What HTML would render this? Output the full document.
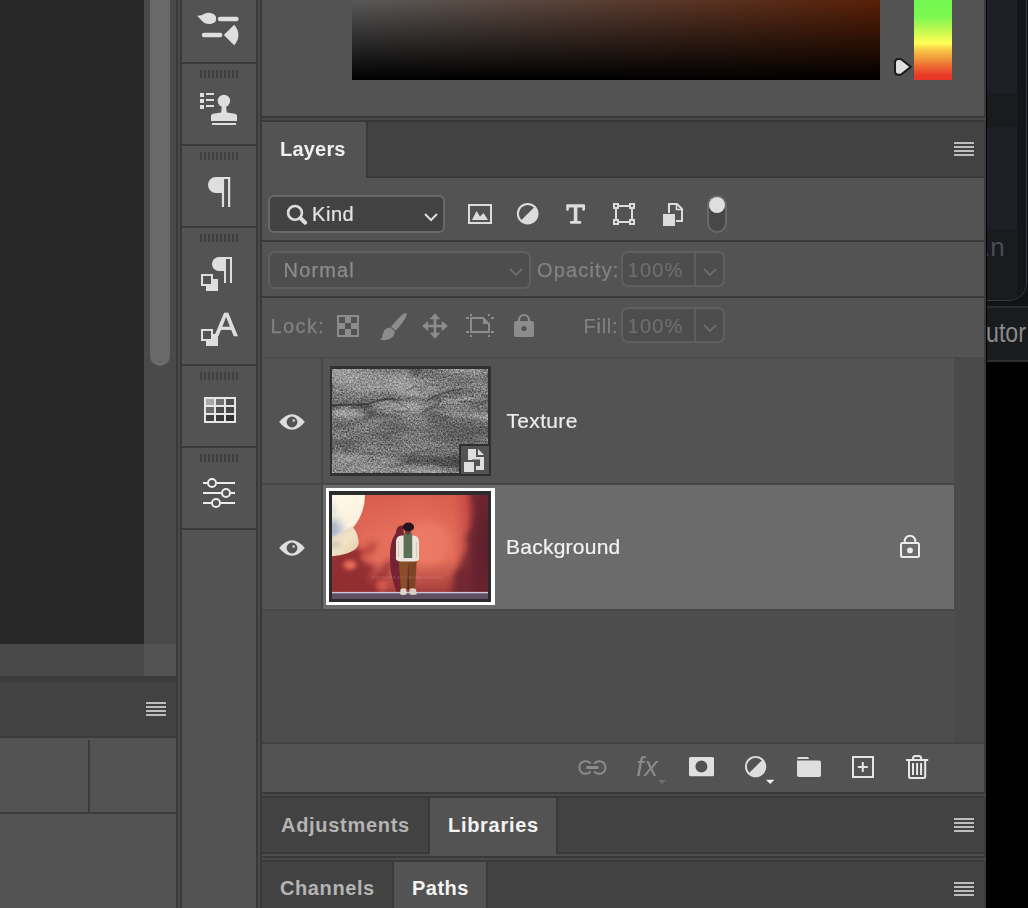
<!DOCTYPE html>
<html lang="en">
<head>
<meta charset="utf-8">
<title>Layers panel</title>
<style>
html,body{margin:0;padding:0;}
body{width:1028px;height:908px;overflow:hidden;background:#535353;position:relative;
  font-family:"Liberation Sans",sans-serif;-webkit-font-smoothing:antialiased;}
.a{position:absolute;}
.d{background:#393939;}   /* dark border */
.m{background:#4a4a4a;}   /* mid border */
.p{background:#535353;}   /* panel */
.t{background:#424242;}   /* tab bar */
.txt{position:absolute;white-space:nowrap;line-height:1;}
svg{position:absolute;overflow:visible;}
.grip{position:absolute;left:200px;width:38px;height:8px;
  background:repeating-linear-gradient(90deg,#404040 0,#404040 2px,transparent 2px,transparent 4px);}
.menu{position:absolute;width:20px;height:14px;
  background:repeating-linear-gradient(180deg,#bdbdbd 0,#bdbdbd 2px,transparent 2px,transparent 4px);}
</style>
</head>
<body>

<!-- ============ LEFT: canvas + scrollbars + bottom-left panel ============ -->
<div class="a" style="left:0;top:0;width:144px;height:644px;background:#282828"></div>
<div class="a m" style="left:144px;top:0;width:32px;height:644px"></div>
<div class="a" style="left:150px;top:-20px;width:20px;height:386px;border-radius:10px;background:#6a6a6a"></div>
<div class="a m" style="left:0;top:644px;width:144px;height:32px;background:#494949"></div>
<div class="a p" style="left:144px;top:644px;width:32px;height:32px"></div>
<div class="a" style="left:0;top:676px;width:176px;height:6px;background:#3c3c3c"></div>
<div class="a t" style="left:0;top:682px;width:176px;height:54px"></div>
<div class="menu" style="left:146px;top:702px"></div>
<div class="a" style="left:0;top:736px;width:176px;height:2px;background:#3c3c3c"></div>
<div class="a" style="left:88px;top:740px;width:2px;height:72px;background:#3c3c3c"></div>
<div class="a" style="left:0;top:812px;width:176px;height:2px;background:#3c3c3c"></div>

<!-- column borders -->
<div class="a d" style="left:176px;top:0;width:2px;height:908px"></div>
<div class="a m" style="left:178px;top:0;width:2px;height:908px"></div>
<div class="a d" style="left:180px;top:0;width:2px;height:908px"></div>
<div class="a d" style="left:256px;top:0;width:2px;height:908px"></div>
<div class="a m" style="left:258px;top:0;width:2px;height:908px"></div>
<div class="a d" style="left:260px;top:0;width:2px;height:908px"></div>

<!-- ============ ICON STRIP 182-256 ============ -->
<div id="strip">
<div class="a d" style="left:182px;top:62px;width:74px;height:2px"></div>
<div class="a d" style="left:182px;top:144px;width:74px;height:2px"></div>
<div class="a d" style="left:182px;top:226px;width:74px;height:2px"></div>
<div class="a d" style="left:182px;top:364px;width:74px;height:2px"></div>
<div class="a d" style="left:182px;top:446px;width:74px;height:2px"></div>
<div class="a d" style="left:182px;top:528px;width:74px;height:2px"></div>
<div class="grip" style="top:70px"></div>
<div class="grip" style="top:152px"></div>
<div class="grip" style="top:234px"></div>
<div class="grip" style="top:372px"></div>
<div class="grip" style="top:454px"></div>
<!-- strip icons -->
<svg style="left:195px;top:10px" width="46" height="38" viewBox="195 10 46 38"><g fill="#dedede"><path d="M197 15.7 Q201.5 16 204.5 13.8 Q207.5 12.4 210.5 12.9 Q216.2 14 216.2 18.5 Q216.2 23 210.5 24 Q205 24.6 201.5 20.5 Q199.5 18 197 15.7 Z"/><rect x="217.8" y="16.8" width="20.8" height="4.4" rx="2.2"/><rect x="201.8" y="32.8" width="20.6" height="4.4" rx="2.2"/><path d="M223.8 35 L234.2 24.8 Q238.4 29.5 238.4 35 Q238.4 40.5 234.2 45.2 Z"/></g></svg>
<svg style="left:198px;top:90px" width="42" height="38" viewBox="198 90 42 38"><g fill="#dedede"><rect x="200" y="93" width="4" height="4"/><rect x="200" y="99" width="4" height="4"/><rect x="200" y="105" width="4" height="4"/><rect x="206" y="93" width="8" height="2"/><rect x="206" y="99" width="8" height="2"/><rect x="206" y="105" width="8" height="2"/><circle cx="223.9" cy="100.9" r="6.2"/><path d="M221.6 104 H226.3 Q226 108 226.8 112.6 L235 113.8 Q237 114.2 237 116 V121 H211 V116 Q211 114.2 213 113.8 L221.1 112.6 Q221.9 108 221.6 104 Z"/><rect x="212" y="123" width="24" height="2"/></g></svg>
<svg style="left:206px;top:176px" width="26" height="32" viewBox="206 176 26 32"><path d="M216 177 H230.2 V207 H228 V179 H224.1 V207 H221.9 V193 H216 A8 8 0 0 1 216 177 Z" fill="#dedede"/></svg>
<svg style="left:199px;top:256px" width="34" height="36" viewBox="199 256 34 36"><path d="M219 257 H232 V283 H230 V259 H226 V283 H224 V271 H219 A7 7 0 0 1 219 257 Z" fill="#dedede"/><rect x="206" y="279" width="12" height="12" fill="#dedede"/><rect x="202" y="275" width="10" height="10" fill="#535353" stroke="#dedede" stroke-width="2"/></svg>
<svg style="left:199px;top:328px" width="20" height="20" viewBox="199 328 20 20"><rect x="206" y="334" width="12" height="12" fill="#dedede"/><rect x="202" y="330" width="10" height="10" fill="#535353" stroke="#dedede" stroke-width="2"/></svg>
<span class="txt" style="left:214.8px;top:307.1px;font-size:34px;color:#dedede;-webkit-text-stroke:.7px #dedede">A</span>
<svg style="left:204px;top:397px" width="32" height="26" viewBox="0 0 32 26"><rect width="32" height="26" fill="#e6e6e6"/><rect x="2" y="2" width="8" height="6" fill="#a8a8a8"/><rect x="12" y="2" width="8" height="6" fill="#707070"/><rect x="22" y="2" width="8" height="6" fill="#4c4c4c"/><rect x="2" y="10" width="8" height="6" fill="#6a6a6a"/><rect x="12" y="10" width="8" height="6" fill="#4a4a4a"/><rect x="22" y="10" width="8" height="6" fill="#444"/><rect x="2" y="18" width="8" height="6" fill="#404040"/><rect x="12" y="18" width="8" height="6" fill="#383838"/><rect x="22" y="18" width="8" height="6" fill="#303030"/></svg>
<svg style="left:201px;top:476px" width="36" height="34" viewBox="201 476 36 34"><g stroke="#ececec" stroke-width="2" fill="none"><path d="M203 483 H207.5 M216.5 483 H235 M203 493 H221.5 M230.5 493 H235 M203 503 H211.5 M220.5 503 H235"/><circle cx="212" cy="483" r="4"/><circle cx="226" cy="493" r="4"/><circle cx="216" cy="503" r="4"/></g></svg>

</div>

<!-- ============ MAIN PANELS 262-984 ============ -->
<div id="main">
<!-- colour picker (cropped) -->
<div class="a" style="left:352px;top:-148px;width:528px;height:228px;background:
 linear-gradient(180deg,rgba(0,0,0,0) 0%,#000 100%),
 linear-gradient(90deg,#fff 0%,#ff5a14 100%)"></div>
<div class="a" style="left:914px;top:-148px;width:38px;height:228px;background:linear-gradient(0deg,
 #e83626 0%,#e83a28 2.2%,#ec6030 5.3%,#f09038 8.8%,#f8c848 13.2%,#ffff55 16.2%,#c0f850 21.9%,#7cf850 27.6%,#74f850 35%,#70fbfd 50%,#0000f5 66.7%,#ea3ff7 83.3%,#e8352a 100%)"></div>
<svg style="left:890px;top:54px" width="26" height="26" viewBox="890 54 26 26"><path d="M898.500 59 H900.800 L910.900 66.850 L900.800 74.700 H898.500 Q895 74.700 895 71.200 V62.500 Q895 59 898.500 59 Z" fill="#e0e0e0" stroke="#1c1c1c" stroke-width="2" stroke-linejoin="round"/></svg>
<!-- separator above Layers -->
<div class="a d" style="left:262px;top:116px;width:722px;height:2px"></div>
<div class="a m" style="left:262px;top:118px;width:724px;height:2px"></div>
<div class="a d" style="left:262px;top:120px;width:722px;height:2px"></div>

<!-- Layers tab bar -->
<div class="a t" style="left:366px;top:122px;width:618px;height:54px"></div>
<div class="a d" style="left:366px;top:122px;width:2px;height:56px"></div>
<div class="a d" style="left:366px;top:176px;width:618px;height:2px"></div>
<span class="txt" style="left:280px;top:138.8px;font-size:20px;font-weight:bold;color:#f0f0f0;letter-spacing:.2px">Layers</span>
<div class="menu" style="left:954px;top:142px"></div>

<!-- filter row -->
<div class="a" style="left:268px;top:195px;width:173px;height:34px;border:2px solid #696969;border-radius:6px;background:#424242"></div>
<svg style="left:286px;top:204px" width="22" height="22" viewBox="0 0 22 22"><circle cx="9" cy="8.9" r="6.9" fill="none" stroke="#dcdcdc" stroke-width="2.6"/><path d="M14.6 14.3 L19.2 18.700" stroke="#dcdcdc" stroke-width="4" stroke-linecap="round"/></svg>
<span class="txt" style="left:312px;top:204px;font-size:20px;color:#e4e4e4;letter-spacing:.55px;-webkit-text-stroke:.2px #e4e4e4">Kind</span>
<svg style="left:423px;top:212px" width="16" height="10" viewBox="0 0 16 10"><path d="M2 2 L8 8 L14 2" fill="none" stroke="#dcdcdc" stroke-width="2"/></svg>
<!-- filter icons -->
<svg style="left:466px;top:202px" width="28" height="24" viewBox="466 202 28 24"><rect x="469" y="205" width="22" height="18" fill="none" stroke="#dcdcdc" stroke-width="2"/><path d="M472 220 L476.5 211 L480 216.5 L483.5 213 L488 220 Z" fill="#dcdcdc"/></svg>
<svg style="left:516px;top:202px" width="24" height="24" viewBox="516 202 24 24"><circle cx="527.7" cy="213.7" r="9.8" fill="none" stroke="#dcdcdc" stroke-width="2"/><path d="M520.4 221 A10.300 10.300 0 0 0 535 206.400 Z" fill="#dcdcdc"/></svg>
<svg style="left:564px;top:202px" width="24" height="24" viewBox="564 202 24 24"><path d="M567.2 204.2 H584 Q585 204.2 585 205.2 V209.5 Q585 210.8 583.6 210.8 Q582.3 210.8 582.3 209.5 V207.6 H577.4 V221 H580 Q581.4 221 581.4 222.4 Q581.4 223.8 580 223.8 H571.2 Q569.8 223.8 569.8 222.4 Q569.8 221 571.2 221 H573.8 V207.6 H568.9 V209.5 Q568.9 210.8 567.5 210.8 Q566.2 210.8 566.2 209.5 V205.2 Q566.2 204.2 567.2 204.2 Z" fill="#dcdcdc"/></svg>
<svg style="left:612px;top:202px" width="24" height="24" viewBox="612 202 24 24"><g fill="none" stroke="#dcdcdc" stroke-width="2"><rect x="614" y="204" width="4" height="4"/><rect x="630" y="204" width="4" height="4"/><rect x="614" y="220" width="4" height="4"/><rect x="630" y="220" width="4" height="4"/><path d="M619 206 H629 M619 222 H629 M616 209 V219 M632 209 V219"/></g></svg>
<svg style="left:662px;top:202px" width="24" height="26" viewBox="662 202 24 26"><path d="M669 213 V204 H677 L682 209 V221 H676" fill="none" stroke="#dcdcdc" stroke-width="2"/><path d="M676.500 204 V209.500 H682" fill="none" stroke="#dcdcdc" stroke-width="1.600"/><rect x="663" y="214" width="12" height="12" fill="#dcdcdc"/></svg>
<div class="a" style="left:707px;top:195px;width:16px;height:34px;border:2px solid #686868;border-radius:10px;background:#484848"></div>
<div class="a" style="left:708.7px;top:196.800px;width:16.600px;height:16.600px;border-radius:50%;background:#dedede"></div>

<div class="a d" style="left:262px;top:240px;width:722px;height:2px"></div>

<!-- blend row -->
<div class="a" style="left:268px;top:251px;width:258.5px;height:34px;border:2px solid #5f5f5f;border-radius:7px;background:#4d4d4d"></div>
<span class="txt" style="left:283.6px;top:260px;font-size:20px;color:#8c8c8c;letter-spacing:1.15px;-webkit-text-stroke:.25px #8c8c8c">Normal</span>
<svg style="left:507.5px;top:267.3px" width="16" height="10" viewBox="0 0 16 10"><path d="M2 2 L8 8 L14 2" fill="none" stroke="#6c6c6c" stroke-width="1.8"/></svg>
<span class="txt" style="left:537px;top:260.4px;font-size:20px;color:#828282;letter-spacing:1.15px;-webkit-text-stroke:.25px #828282">Opacity:</span>
<div class="a" style="left:621px;top:251px;width:100px;height:32px;border:2px solid #5f5f5f;border-radius:7px;background:#4d4d4d"></div>
<div class="a" style="left:694px;top:253px;width:2px;height:32px;background:#5f5f5f"></div>
<span class="txt" style="left:627.6px;top:260.4px;font-size:20px;color:#6e6e6e;letter-spacing:1.2px;-webkit-text-stroke:.2px #6e6e6e">100%</span>
<svg style="left:702px;top:267.3px" width="16" height="10" viewBox="0 0 16 10"><path d="M2 2 L8 8 L14 2" fill="none" stroke="#6c6c6c" stroke-width="1.8"/></svg>
<div class="a d" style="left:262px;top:296px;width:722px;height:2px"></div>

<!-- lock row -->
<span class="txt" style="left:270.5px;top:316.3px;font-size:20px;color:#828282;letter-spacing:1.4px;-webkit-text-stroke:.25px #828282">Lock:</span>
<!-- lock icons -->
<svg style="left:337px;top:315px" width="22" height="22" viewBox="0 0 22 22"><rect x="0" y="0" width="22" height="22" fill="#8c8c8c"/><g fill="#525252"><rect x="2" y="2" width="6" height="6"/><rect x="14" y="2" width="6" height="6"/><rect x="8" y="8" width="6" height="6"/><rect x="2" y="14" width="6" height="6"/><rect x="14" y="14" width="6" height="6"/></g></svg>
<svg style="left:378px;top:310px" width="32" height="32" viewBox="378 310 32 32"><path d="M405.6 312.9 Q407.2 313.2 406.4 315.6 C404.6 320.5 400.5 326 395.6 330.6 L391 326.7 C395.5 321 400.5 316 404 313.4 Q404.9 312.8 405.6 312.9 Z" fill="#8c8c8c"/><path d="M390.4 327.5 Q386 327.3 384 331 Q382.6 334 382.3 336.5 Q382 338.6 380.1 339.7 Q384 340.7 388 339.5 Q392.6 338 394.2 334.4 Q395.2 332 394.8 331.2 Z" fill="#8c8c8c"/></svg>
<svg style="left:421px;top:312px" width="28" height="28" viewBox="-14 -14 28 28"><g fill="#8c8c8c"><rect x="-8.5" y="-1.3" width="17" height="2.6"/><rect x="-1.3" y="-8.5" width="2.6" height="17"/><path d="M-12.8 0 L-6.8 -5.3 V5.3 Z"/><path d="M12.8 0 L6.8 -5.3 V5.3 Z"/><path d="M0 -12.8 L-5.3 -6.8 H5.3 Z"/><path d="M0 12.8 L-5.3 6.8 H5.3 Z"/></g></svg>
<svg style="left:464px;top:312px" width="32" height="28" viewBox="464 312 32 28"><path d="M471 318 H483 L489 324 V332 H471 Z" fill="none" stroke="#8c8c8c" stroke-width="2"/><path d="M483 318 V324 H489 Z" fill="#8c8c8c"/><g fill="#8c8c8c"><rect x="470" y="314" width="2" height="2"/><rect x="488" y="314" width="2" height="2"/><rect x="466" y="317" width="3" height="2"/><rect x="491" y="317" width="3" height="2"/><rect x="466" y="331" width="3" height="2"/><rect x="491" y="331" width="3" height="2"/><rect x="470" y="335" width="2" height="2"/><rect x="488" y="335" width="2" height="2"/></g></svg>
<svg style="left:512px;top:312px" width="24" height="28" viewBox="512 312 24 28"><path d="M519 322 V320 A5 5 0 0 1 529 320 V322" fill="none" stroke="#8c8c8c" stroke-width="2.2"/><path d="M516 321 H532 Q534 321 534 323 V335 Q534 337 532 337 H516 Q514 337 514 335 V323 Q514 321 516 321 Z M524 326 A2.6 2.6 0 1 0 524 331.2 A2.6 2.6 0 1 0 524 326 Z" fill="#8c8c8c" fill-rule="evenodd"/></svg>

<span class="txt" style="left:583.6px;top:316px;font-size:20px;color:#828282;letter-spacing:.7px;-webkit-text-stroke:.25px #828282">Fill:</span>
<div class="a" style="left:621px;top:307px;width:100px;height:32px;border:2px solid #5f5f5f;border-radius:7px;background:#4d4d4d"></div>
<div class="a" style="left:694px;top:309px;width:2px;height:32px;background:#5f5f5f"></div>
<span class="txt" style="left:627.6px;top:316.4px;font-size:20px;color:#6e6e6e;letter-spacing:1.2px;-webkit-text-stroke:.2px #6e6e6e">100%</span>
<svg style="left:702px;top:323.3px" width="16" height="10" viewBox="0 0 16 10"><path d="M2 2 L8 8 L14 2" fill="none" stroke="#6c6c6c" stroke-width="1.8"/></svg>

<!-- layer list -->
<div class="a" style="left:262px;top:357px;width:722px;height:1px;background:#4a4a4a"></div>
<div class="a m" style="left:954px;top:358px;width:30px;height:384px"></div>
<div class="a" style="left:262px;top:611px;width:692px;height:131px;background:#4d4d4d"></div>
<div class="a" style="left:323px;top:485px;width:631px;height:124px;background:#6b6b6b"></div>
<div class="a" style="left:321px;top:357px;width:2px;height:254px;background:#474747"></div>
<div class="a" style="left:262px;top:483px;width:692px;height:2px;background:#474747"></div>
<div class="a" style="left:262px;top:609px;width:692px;height:2px;background:#474747"></div>
<span class="txt" style="left:506.5px;top:410.2px;font-size:21px;color:#ececec;letter-spacing:.33px;-webkit-text-stroke:.2px #ececec">Texture</span>
<span class="txt" style="left:506px;top:536.4px;font-size:21px;color:#f2f2f2;letter-spacing:.24px;-webkit-text-stroke:.2px #f2f2f2">Background</span>
<!-- thumbnails -->
<div class="a" style="left:330px;top:366px;width:161px;height:109.5px;background:#303030"></div>
<svg style="left:332px;top:368.500px;overflow:hidden" width="156" height="104.500" viewBox="0 0 156 105" preserveAspectRatio="none">
<defs>
<filter id="tn" x="0" y="0" width="100%" height="100%" color-interpolation-filters="sRGB">
<feTurbulence type="fractalNoise" baseFrequency="0.62" numOctaves="2" seed="7" result="hi"/>
<feColorMatrix in="hi" type="matrix" values="1.5 0 0 0 -0.25  1.5 0 0 0 -0.25  1.5 0 0 0 -0.25  0 0 0 0 1"/>
</filter>
<filter id="tl" x="0" y="0" width="100%" height="100%" color-interpolation-filters="sRGB">
<feTurbulence type="fractalNoise" baseFrequency="0.02 0.07" numOctaves="4" seed="11"/>
<feColorMatrix type="matrix" values="2.4 0 0 0 -0.7  2.4 0 0 0 -0.7  2.4 0 0 0 -0.7  0 0 0 0 1"/>
</filter>
<filter id="b2" x="-100%" y="-100%" width="300%" height="300%"><feGaussianBlur stdDeviation="2.2"/></filter>
<filter id="b1" x="-100%" y="-100%" width="300%" height="300%"><feGaussianBlur stdDeviation="0.7"/></filter>
<filter id="b3" x="-100%" y="-100%" width="300%" height="300%"><feGaussianBlur stdDeviation="3"/></filter>
<filter id="b4" x="-100%" y="-100%" width="300%" height="300%"><feGaussianBlur stdDeviation="5"/></filter>
</defs>
<rect width="156" height="105" fill="#717171"/>
<rect width="156" height="105" filter="url(#tl)" opacity=".3"/>
<g filter="url(#b3)">
<path d="M0 0 H80 Q84 8 70 14 Q40 22 0 20 Z" fill="#989898" opacity=".8"/>
<ellipse cx="70" cy="14" rx="16" ry="7" fill="#a4a4a4" opacity=".6"/>
<ellipse cx="120" cy="10" rx="36" ry="9" fill="#8a8a8a" opacity=".6"/>
<path d="M0 22 H70 L60 32 Q30 36 0 36 Z" fill="#6e6e6e" opacity=".7"/>
<ellipse cx="16" cy="44" rx="17" ry="5" fill="#b0b0b0" opacity=".85"/>
<ellipse cx="62" cy="36" rx="22" ry="4" fill="#a8a8a8" opacity=".8"/>
<ellipse cx="126" cy="37" rx="14" ry="3.500" fill="#9c9c9c" opacity=".7"/>
<rect x="-5" y="52" width="166" height="34" fill="#6a6a6a" opacity=".6"/>
<ellipse cx="140" cy="58" rx="12" ry="9" fill="#5a5a5a" opacity=".6"/>
<ellipse cx="12" cy="58" rx="12" ry="6" fill="#5e5e5e" opacity=".5"/>
<ellipse cx="50" cy="101" rx="60" ry="5" fill="#9a9a9a" opacity=".8"/>
<ellipse cx="6" cy="90" rx="6" ry="14" fill="#8e8e8e" opacity=".6"/>
</g>
<rect width="156" height="105" filter="url(#tn)" opacity=".5" style="mix-blend-mode:overlay"/>
<g filter="url(#b1)" fill="none" stroke="#303030" stroke-linecap="round" opacity=".7">
<path d="M0 37 Q14 35.500 24 36 T44 32.500 T62 30.500" stroke-width="2"/>
<path d="M18 39 Q30 40 40 37" stroke-width="1.5" opacity=".6"/>
<path d="M62 31 Q70 35 78 41" stroke-width="1.2" opacity=".5"/>
<path d="M96 31 Q103 27 112 24 T130 20" stroke-width="1.5" opacity=".8"/>
<path d="M94 41 Q103 38.500 108 33" stroke-width="3" opacity=".55"/>
<path d="M62 42 Q68 44 76 42" stroke-width="2" opacity=".5"/>
<path d="M74 22 Q80 20 84 16" stroke-width="1.3" opacity=".55"/>
<path d="M128 33 Q132 34 135 32" stroke-width="2" opacity=".5"/>
</g>
</svg>
<div class="a" style="left:459px;top:444px;width:27.500px;height:27.500px;border:2px solid #2e2e2e;border-right-width:2.500px;background:#535353"></div>
<svg style="left:462px;top:447px" width="26" height="26" viewBox="462 447 26 26"><g fill="#dedede"><path d="M468 449 H476 V457 H484 V470 H476 V466 H480 V459.500 H472 V460 H468 Z"/><path d="M478 449 L484 455 H478 Z"/><rect x="464" y="462" width="10" height="10"/></g></svg>

<div class="a" style="left:326px;top:488px;width:169px;height:117px;background:#fff"></div>
<div class="a" style="left:329px;top:491px;width:162px;height:111px;background:#2c2c2c"></div>
<svg style="left:332px;top:495px;overflow:hidden" width="156" height="104" viewBox="0 0 156 104">
<defs>
<linearGradient id="wall" x1="0" x2="1" y1="0" y2="0"><stop offset="0" stop-color="#d45c4a"/><stop offset=".2" stop-color="#e26a58"/><stop offset=".55" stop-color="#e8745f"/><stop offset=".78" stop-color="#e26c58"/><stop offset=".86" stop-color="#c8524a"/><stop offset=".91" stop-color="#84303a"/><stop offset=".96" stop-color="#64202c"/><stop offset="1" stop-color="#561a26"/></linearGradient>
<linearGradient id="wtop" x1="0" x2="0" y1="0" y2="1"><stop offset="0" stop-color="#c8443a" stop-opacity=".4"/><stop offset="1" stop-color="#c8443a" stop-opacity="0"/></linearGradient><linearGradient id="wdark" x1="0" x2="0" y1="0" y2="1"><stop offset="0" stop-color="#8a2830" stop-opacity="0"/><stop offset=".62" stop-color="#8a2830" stop-opacity="0"/><stop offset=".95" stop-color="#8a2830" stop-opacity=".75"/></linearGradient>
<radialGradient id="sph1" cx=".7" cy=".4" r=".7"><stop offset="0" stop-color="#fff9ec"/><stop offset=".6" stop-color="#fcf1de"/><stop offset="1" stop-color="#f0e2cc"/></radialGradient>
<linearGradient id="sph2" x1="0" x2="1" y1="0" y2="1"><stop offset="0" stop-color="#e4d8c0"/><stop offset=".5" stop-color="#f2e4c6"/><stop offset="1" stop-color="#e0cca8"/></linearGradient>
<clipPath id="c1"><circle cx="-17" cy="0" r="50"/></clipPath>
</defs>
<rect width="156" height="104" fill="url(#wall)"/>
<rect width="156" height="104" fill="url(#wdark)"/><rect width="156" height="40" fill="url(#wtop)"/>
<g filter="url(#b3)">
<ellipse cx="96" cy="48" rx="22" ry="22" fill="#ee7e68" opacity=".6"/>
<path d="M137 -5 L143 16 L141 32 L133 42 L136 52 L130 64 L121 84 L118 110 H160 V-5 Z" fill="#62202c" opacity=".75"/>
<ellipse cx="127" cy="81" rx="5" ry="6" fill="#6a2230" opacity=".85"/>
<path d="M-5 60 L24 52 L34 58 L30 66 L44 72 L36 84 L44 100 H-5 Z" fill="#902c30" opacity=".95"/>
<path d="M34 100 L40 84 L50 74 L56 64 L62 68 L54 82 L46 100 Z" fill="#8e2c30" opacity=".8"/>
<path d="M30 56 L40 46 L46 50 L38 60 Z" fill="#b04038" opacity=".8"/>
</g>
<g filter="url(#b2)">
<ellipse cx="18" cy="70" rx="6.500" ry="4.500" fill="#ec6e5c"/>
<ellipse cx="33" cy="62" rx="4" ry="3" fill="#d85c4e" opacity=".8"/>
<ellipse cx="50" cy="90" rx="6" ry="6" fill="#e06452" opacity=".7"/>
</g>
<circle cx="-17" cy="0" r="50" fill="url(#sph1)"/>
<g clip-path="url(#c1)"><ellipse cx="0" cy="34" rx="10" ry="10" fill="#9fb0c8" filter="url(#b4)"/><ellipse cx="-2" cy="14" rx="6" ry="8" fill="#dcdcdc" filter="url(#b3)" opacity=".7"/></g>
<path d="M-2 45.500 L21 32.600 Q27.200 40 26.500 49 Q24.500 58 2 61 L-2 61 Z" fill="url(#sph2)"/>
<path d="M-2 45.500 L21 32.600" stroke="#e8dcc4" stroke-width="3" filter="url(#b1)" opacity=".8"/>
<ellipse cx="2" cy="50" rx="8" ry="4" fill="#c8c0b0" filter="url(#b2)" opacity=".6"/>
<!-- person shadow -->
<path d="M71 30.500 Q65.500 30 64.500 35 Q64 39 61.500 42 Q58.500 48 58 58 Q57.600 72 60.500 84 L64.500 97.500 H72 L72 41 Z" fill="#742230" filter="url(#b1)"/>
<!-- floor -->
<rect x="0" y="97.500" width="156" height="6.500" fill="#5e5062"/>
<rect x="0" y="96.900" width="156" height="1.400" fill="#cfc4d8"/>
<!-- person -->
<path d="M66.600 66 H76.200 L75.200 94.500 H69 Z" fill="#8a4e28"/><path d="M76.200 66 H84.700 L83 94.500 H77 Z" fill="#7c4424"/>
<path d="M75.700 78 L76.200 66 L76.700 78 L77 94.500 H75.200 Z" fill="#4a2420"/>
<path d="M64 46 Q64.500 41 69.500 40.600 H81.500 Q86.500 41 87 46 V64.500 Q85 67 81 66.400 H70 Q66 67 64 64.500 Z" fill="#ebe5db"/>
<path d="M66.500 46 V62 M84.500 47 V63" stroke="#cfcac4" stroke-width="1.200" fill="none"/>
<path d="M71.600 40 Q72 37.500 73.500 38 H78.500 Q80 37.500 80.200 40 V63.200 H71.600 Z" fill="#5c7058"/>
<rect x="71.600" y="63.200" width="8.600" height="2.800" fill="#e8e4e0"/>
<ellipse cx="76" cy="36.200" rx="2.900" ry="3.600" fill="#6a3e2e"/>
<ellipse cx="76.400" cy="32" rx="5.700" ry="4.400" fill="#22161a"/>
<path d="M68.500 94.200 Q71.500 92.500 74.300 94.200 L74.500 99.200 Q71 100.600 68.200 99.200 Z" fill="#e0d8cc"/><path d="M77.500 94.200 Q80.500 92.500 84 94.200 L84.700 99.200 Q81 100.600 77.500 99.200 Z" fill="#d6cec2"/>
<text x="40" y="84" font-family="Liberation Sans, sans-serif" font-size="3.200" fill="#e8b8b0" opacity=".3" letter-spacing=".3">PORTRAIT OF A YOUNG MAN STANDING</text>
</svg>

<!-- eye icons + lock -->
<svg style="left:277.4px;top:411.500px" width="30" height="20" viewBox="-15 -10 30 20"><path d="M-12.8 0 Q-6.5 -7.8 0 -7.8 Q6.5 -7.8 12.8 0 Q6.5 7.8 0 7.8 Q-6.5 7.8 -12.8 0 Z M0 -5.4 A5.4 5.4 0 1 0 0 5.4 A5.4 5.4 0 1 0 0 -5.4 Z" fill="#dddddd" fill-rule="evenodd"/><rect x="0.6" y="-2.6" width="2.2" height="2.2" fill="#dddddd"/></svg>
<svg style="left:277.4px;top:537.500px" width="30" height="20" viewBox="-15 -10 30 20"><path d="M-12.8 0 Q-6.5 -7.8 0 -7.8 Q6.5 -7.8 12.8 0 Q6.5 7.8 0 7.8 Q-6.5 7.8 -12.8 0 Z M0 -5.4 A5.4 5.4 0 1 0 0 5.4 A5.4 5.4 0 1 0 0 -5.4 Z" fill="#dddddd" fill-rule="evenodd"/><rect x="0.6" y="-2.6" width="2.2" height="2.2" fill="#dddddd"/></svg>
<svg style="left:898px;top:532px" width="24" height="28" viewBox="898 532 24 28"><rect x="901" y="543" width="18" height="14" rx="1.5" fill="none" stroke="#ececec" stroke-width="2"/><path d="M904.7 543 V541 A5.3 5.3 0 0 1 915.3 541 V543" fill="none" stroke="#ececec" stroke-width="2"/><circle cx="910" cy="550.4" r="2.9" fill="#ececec"/></svg>


<!-- layers footer -->
<div class="a" style="left:262px;top:742px;width:722px;height:2px;background:#424242"></div>
<!-- footer icons -->
<svg style="left:576px;top:758px" width="34" height="20" viewBox="576 758 34 20"><g fill="none" stroke="#8c8c8c" stroke-width="2"><path d="M590.600 763.700 A6.300 6.300 0 1 0 590.600 771.300"/><path d="M594.200 763.700 A6.300 6.300 0 1 1 594.200 771.300"/></g><path d="M587.5 767.5 H597.3" stroke="#8c8c8c" stroke-width="3" stroke-linecap="round"/></svg>
<span class="txt" style="left:636.3px;top:754.300px;font-size:27px;font-style:italic;color:#8c8c8c;letter-spacing:.4px">fx</span>
<svg style="left:658px;top:780px" width="8" height="4" viewBox="0 0 8 4"><path d="M0 0 H8 L4 4 Z" fill="#6e6e6e"/></svg>
<svg style="left:688px;top:756px" width="28" height="22" viewBox="688 756 28 22"><path d="M690.5 757 H712.5 Q714 757 714 758.5 V774.7 Q714 776.2 712.5 776.2 H690.5 Q689 776.2 689 774.7 V758.5 Q689 757 690.5 757 Z M701.4 760.5 A6 6 0 1 0 701.4 772.5 A6 6 0 1 0 701.4 760.5 Z" fill="#e0e0e0" fill-rule="evenodd"/></svg>
<svg style="left:744px;top:754px" width="32" height="32" viewBox="744 754 32 32"><circle cx="755.6" cy="766.6" r="9.7" fill="none" stroke="#dedede" stroke-width="1.9"/><path d="M748.4 773.800 A10.200 10.200 0 0 0 762.800 759.400 Z" fill="#dedede"/><path d="M766 779.7 H774.3 L770.15 784.1 Z" fill="#f2f2f2"/></svg>
<svg style="left:796px;top:756px" width="26" height="22" viewBox="796 756 26 22"><path d="M797 759 Q797 757 799 757 H807 Q809 757 809 759 Z" fill="#dedede"/><path d="M797 760.6 H819 Q821 760.6 821 762.6 V775 Q821 777 819 777 H799 Q797 777 797 775 Z" fill="#dedede"/></svg>
<svg style="left:852px;top:756px" width="22" height="22" viewBox="0 0 22 22"><rect x="1" y="1" width="20" height="20" fill="none" stroke="#e4e4e4" stroke-width="2"/><path d="M5.8 11 H15.8 M10.8 6 V16" stroke="#e4e4e4" stroke-width="2"/></svg>
<svg style="left:904px;top:754px" width="26" height="26" viewBox="904 754 26 26"><g fill="none" stroke="#e8e8e8" stroke-width="2"><path d="M906 760 H928.2"/><path d="M913 760 V758.5 Q913 756 915.5 756 H918.7 Q921.2 756 921.2 758.5 V760"/><path d="M909 761 V776.5 Q909 778 910.5 778 H923.7 Q925.2 778 925.2 776.5 V761"/><path d="M913 763 V775 M917.1 763 V775 M921.1 763 V775"/></g></svg>


<div class="a d" style="left:262px;top:792px;width:722px;height:2px"></div>
<div class="a m" style="left:262px;top:794px;width:724px;height:2px"></div>
<div class="a d" style="left:262px;top:796px;width:722px;height:2px"></div>
<div class="a t" style="left:262px;top:798px;width:722px;height:54px"></div>
<div class="a d" style="left:262px;top:852px;width:722px;height:2px"></div>
<div class="a" style="left:262px;top:854px;width:722px;height:2px;background:#4c4c4c"></div>
<div class="a p" style="left:430px;top:798px;width:126px;height:58px"></div>
<div class="a d" style="left:428px;top:798px;width:2px;height:56px"></div>
<div class="a d" style="left:556px;top:798px;width:2px;height:56px"></div>
<span class="txt" style="left:281px;top:814.5px;font-size:20px;font-weight:bold;color:#b4b4b4;letter-spacing:.7px">Adjustments</span>
<span class="txt" style="left:448px;top:814.5px;font-size:20px;font-weight:bold;color:#f4f4f4;letter-spacing:.7px">Libraries</span>
<div class="menu" style="left:954px;top:818px"></div>
<div class="a d" style="left:262px;top:856px;width:722px;height:2px"></div>
<div class="a m" style="left:262px;top:858px;width:724px;height:2px"></div>
<div class="a d" style="left:262px;top:860px;width:722px;height:2px"></div>
<div class="a t" style="left:262px;top:862px;width:722px;height:46px"></div>
<div class="a p" style="left:394px;top:862px;width:92px;height:46px"></div>
<div class="a d" style="left:392px;top:862px;width:2px;height:46px"></div>
<div class="a d" style="left:486px;top:862px;width:2px;height:46px"></div>
<span class="txt" style="left:280px;top:878.3px;font-size:20px;font-weight:bold;color:#b4b4b4;letter-spacing:.6px">Channels</span>
<span class="txt" style="left:412px;top:878.3px;font-size:20px;font-weight:bold;color:#f4f4f4;letter-spacing:.5px">Paths</span>
<div class="menu" style="left:954px;top:882px"></div>

</div>

<!-- ============ RIGHT COLUMN ============ -->
<div id="right">
<div class="a" style="left:984px;top:0;width:2px;height:908px;background:#3b3b3b"></div>
<div class="a m" style="left:984px;top:118px;width:2px;height:2px"></div><div class="a m" style="left:984px;top:794px;width:2px;height:2px"></div><div class="a m" style="left:984px;top:858px;width:2px;height:2px"></div>
<div class="a" style="left:986px;top:0;width:42px;height:908px;background:#000"></div>
<div class="a" style="left:987px;top:0;width:41px;height:306px;background:#121315"></div>
<div class="a" style="left:987px;top:-30px;width:41px;height:332px;overflow:hidden">
 <div class="a" style="left:-40px;top:0;width:77.500px;height:328.500px;border:1.600px solid #353840;border-radius:18px;background:#1d2027;overflow:hidden">
  <div class="a" style="left:38.400px;top:122.400px;width:31px;height:34px;background:#1a1b1f"></div>
  <div class="a" style="left:38.400px;top:258.400px;width:31px;height:80px;background:#1a1b1f"></div>
  <div class="a" style="left:69.400px;top:0;width:12px;height:340px;background:#13161b"></div>
 </div>
</div>
<div class="a" style="left:987px;top:306.200px;width:41px;height:1.500px;background:#2b2c2f"></div>
<div class="a" style="left:987px;top:307.700px;width:41px;height:52.300px;background:#1a1b1d"></div>
<div class="a" style="left:987px;top:360px;width:41px;height:2px;background:#2e2f33"></div>
<div class="a" style="left:987px;top:225px;width:41px;height:40px;overflow:hidden"><span class="txt" style="left:-4px;top:9px;font-size:26px;color:#474c55">.n</span></div>
<div class="a" style="left:987px;top:315px;width:41px;height:40px;overflow:hidden"><span class="txt" style="left:-1.5px;top:5.3px;font-size:27px;color:#8a8a8a;transform:scaleX(.86);transform-origin:0 0">utor</span></div>
</div>

</body>
</html>
